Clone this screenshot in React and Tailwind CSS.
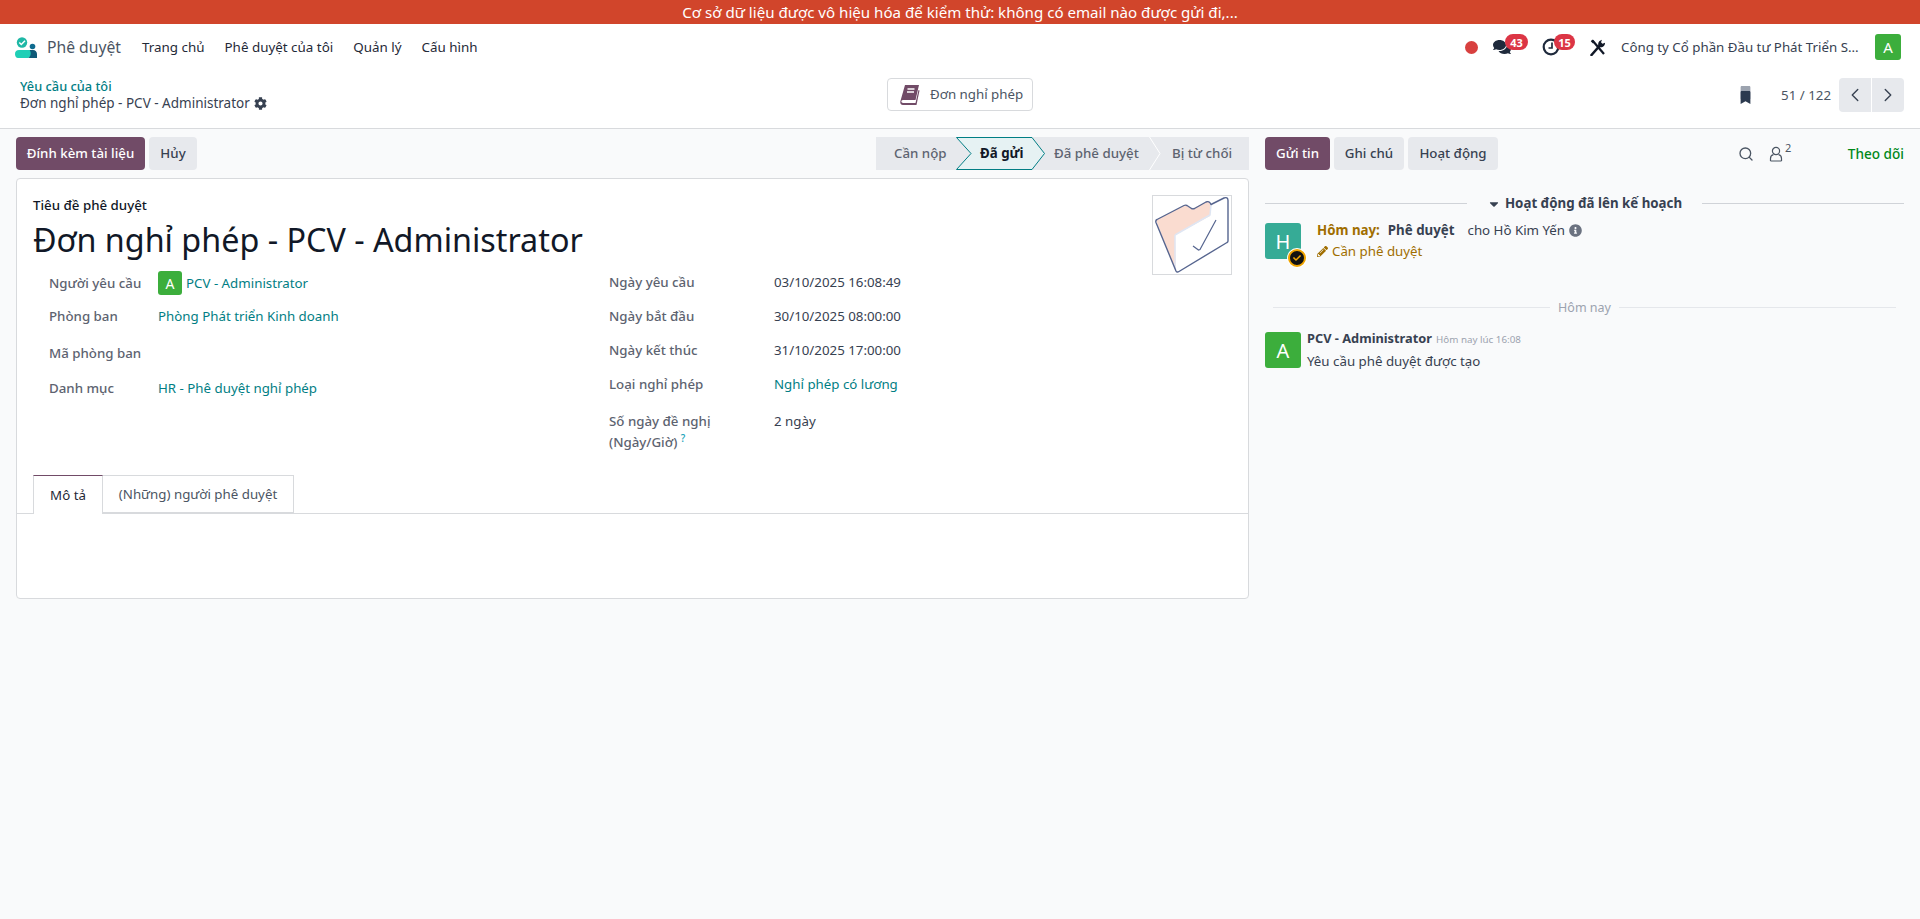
import React from "react";
import { ChevronLeft, ChevronRight, Search } from "lucide-react";
import { FaComments, FaCog, FaBookmark, FaCaretDown, FaInfoCircle, FaPencilAlt, FaCheck } from "react-icons/fa";

const font = { fontFamily: '"Noto Sans", sans-serif' };

function Logo() {
  return (
    <svg width="22" height="21" viewBox="0 0 22 21" className="shrink-0">
      <circle cx="7" cy="5.500" r="5.200" fill="#1fb8a6" />
      <path d="M4.300 5.500l2 2L10 3.800" fill="none" stroke="#fff" strokeWidth="1.500" />
      <circle cx="17.500" cy="9.500" r="2.800" fill="#0f6b8f" />
      <path d="M0 17c0-2.500 1.500-4 4-4h10c4 0 3 7-1 8H3c-2 0-3-2-3-4z" fill="#1fcfb6" />
      <path d="M13 21c3-1 3.500-6 1.500-8H18c2.500 0 4 1.800 4 4v4z" fill="#0f5a78" />
    </svg>
  );
}

function Book() {
  return (
    <svg width="20" height="22" viewBox="0 0 20 22">
      <path d="M5 1h14l-3.500 15H3c-1.200 0-1.800 1-1.600 1.800.2.700.8 1.200 1.600 1.200h12.500l3-13 1 .5L16.500 21H3c-2 0-3-1.500-2.700-3.500z" fill="#714b67" />
      <path d="M4 15.500L7 2h11l-3 13.500z" fill="#714b67" />
      <path d="M7.500 5h7M7 8h7" stroke="#fff" strokeWidth="1.300" />
    </svg>
  );
}

function Folder() {
  return (
    <svg width="78" height="78" viewBox="1 1 78 78">
      <path d="M4 25 L33 10 L40.700 14 L56 5.700 L59 10 L58 21 L23 40 L24 77z" fill="#fadcd0" />
      <path d="M23 40 L58 20 L59 10" fill="none" stroke="#dfe6f3" strokeWidth="1.500" />
      <path d="M23 40 L23 74" stroke="#dfe6f3" strokeWidth="1.500" />
      <path d="M5 24.500 L32 10.500 C33 10 34 10 35 10.500 L39.500 13.500 C40.500 14 41.500 14 42.500 13.500 L54 7 C56 6 58 7 59 9.500 L72 3 C74.500 2 76 3 76 5.500 L76 46 C76 46.500 76 47 75 47.500 L27 76.500 C25.500 77.500 24.500 77 24 76 L4 27.500 C3.500 26 4 25 5 24.500z" fill="none" stroke="#56658f" strokeWidth="1.400" strokeLinejoin="round" />
      <path d="M41 51l5.500 4 1.500-.5L64 25" fill="none" stroke="#56658f" strokeWidth="1.200" />
    </svg>
  );
}

function Clock() {
  return (
    <svg width="18" height="18" viewBox="0 0 18 18">
      <circle cx="9" cy="9" r="7.300" fill="none" stroke="#1f2a3c" strokeWidth="2.200" />
      <path d="M10 4.500V10H6.500" fill="none" stroke="#1f2a3c" strokeWidth="1.700" />
    </svg>
  );
}

function Tools() {
  return (
    <svg width="16" height="17" viewBox="0 0 16 17">
      <path d="M1.500 16L9 7.500" stroke="#111827" strokeWidth="2.600" strokeLinecap="round" />
      <path d="M9 8c-1.500-1.800-1-4.500.5-6L12 .8 11 3.300l1.500 1.500L15 3.800c.2 2.500-2 5-5 4.500z" fill="#111827" />
      <path d="M2.500 1.500L14 15" stroke="#111827" strokeWidth="2.200" />
      <path d="M.8 2.200L2.400.6 4.500 3 3 4.500z" fill="#111827" />
    </svg>
  );
}

function Badge({ children, className }) {
  return (
    <span className={`absolute flex h-4 items-center justify-center rounded-full bg-[#dc3545] text-[11px] font-bold text-white ${className}`}>
      {children}
    </span>
  );
}

function Avatar({ letter, bg, size, text }) {
  return (
    <div className={`flex shrink-0 items-center justify-center rounded-[3px] text-white ${bg} ${size} ${text}`}>{letter}</div>
  );
}

function Field({ label, h, children }) {
  return (
    <div className={`flex items-center ${h}`}>
      <div className="w-[109px] shrink-0 font-medium text-[#5d6370]">{label}</div>
      <div className="flex items-center">{children}</div>
    </div>
  );
}

function RField({ label, children }) {
  return (
    <div className="flex h-[34px] items-center">
      <div className="w-[165px] shrink-0 font-medium text-[#5d6370]">{label}</div>
      <div>{children}</div>
    </div>
  );
}

function Stage({ w, pl, active, children }) {
  return (
    <div className={`relative flex h-full items-center ${w} ${pl} ${active ? "font-bold text-[#111827]" : "font-medium text-[#5d6370]"}`}>
      {children}
    </div>
  );
}

function Chevron({ cls }) {
  return (
    <svg width="12" height="33" viewBox="0 0 12 33" className={`absolute top-0 ${cls}`}>
      <path d="M0.500 0L11 16.500 0.500 33" fill="none" stroke="#fff" strokeWidth="1" />
    </svg>
  );
}

export default function App() {
  return (
    <div className="flex min-h-[919px] flex-col bg-[#f9fafb] text-[13.300px] leading-[21px] text-[#374151]" style={font}>
      <div className="flex h-6 items-center justify-center bg-[#d1452b] text-[15.100px] text-white">
        Cơ sở dữ liệu được vô hiệu hóa để kiểm thử: không có email nào được gửi đi,...
      </div>

      <header className="flex h-[46px] items-center bg-white pl-[15px] pr-[19px]">
        <Logo />
        <span className="ml-[10px] text-[15.700px] text-[#4b5563]">Phê duyệt</span>
        <nav className="ml-[21px] flex gap-[20px] text-[13.400px] text-[#1f2937]">
          <span>Trang chủ</span>
          <span>Phê duyệt của tôi</span>
          <span>Quản lý</span>
          <span>Cấu hình</span>
        </nav>
        <div className="ml-auto flex items-center">
          <span className="h-[13px] w-[13px] rounded-full bg-[#d8403f]" />
          <span className="relative ml-[15px] flex w-[49px] text-[#1f2a3c]">
            <FaComments size={18} />
            <Badge className="-top-[4px] left-[12px] w-[23px]">43</Badge>
          </span>
          <span className="relative flex w-[48px]">
            <Clock />
            <Badge className="-top-[4px] left-[12px] w-[21px]">15</Badge>
          </span>
          <Tools />
          <span className="ml-[15px] w-[254px] whitespace-nowrap text-[#374151]">Công ty Cổ phần Đầu tư Phát Triển S...</span>
          <Avatar letter="A" bg="bg-[#3cae3c]" size="h-[26px] w-[26px]" text="text-[15px]" />
        </div>
      </header>

      <div className="relative flex h-[59px] items-start border-b border-[#d8dadd] bg-white pl-5 pr-4">
        <div className="pt-[8px] leading-[17px]">
          <div className="text-[12.800px] font-medium text-[#017e84]">Yêu cầu của tôi</div>
          <div className="flex items-center gap-1 text-[13.500px] text-[#374151]">
            Đơn nghỉ phép - PCV - Administrator <FaCog size={13} />
          </div>
        </div>
        <div className="absolute left-[887px] top-[8px] flex h-[33px] w-[146px] items-center gap-[10px] rounded-[4px] border border-[#d8dadd] pl-[12px] text-[#4b5563]">
          <Book />
          <span>Đơn nghỉ phép</span>
        </div>
        <div className="ml-auto flex items-center pt-[8px]">
          <span className="relative mr-[29px] h-[18px] w-[13px]">
            <FaBookmark size={13} className="absolute right-0 top-0 text-[#9ca3af]" />
            <FaBookmark size={13} className="absolute bottom-0 left-0 text-[#2c3a4f]" />
          </span>
          <span className="mr-2 text-[#4b5563]">51 / 122</span>
          <div className="flex h-[34px] gap-px">
            <span className="flex w-[32px] items-center justify-center rounded-l-[4px] bg-[#e7e9ed]"><ChevronLeft size={22} strokeWidth={1.5} /></span>
            <span className="flex w-[32px] items-center justify-center rounded-r-[4px] bg-[#e7e9ed]"><ChevronRight size={22} strokeWidth={1.5} /></span>
          </div>
        </div>
      </div>

      <main className="flex flex-1">
        <section className="w-[1265px] shrink-0 pl-4 pr-4 pt-2">
          <div className="flex h-[33px] items-center justify-between">
            <div className="flex h-full gap-1">
              <span className="flex w-[129px] items-center justify-center rounded-[4px] bg-[#714b67] font-medium text-white">Đính kèm tài liệu</span>
              <span className="flex w-[48px] items-center justify-center rounded-[4px] bg-[#e7e9ed] font-medium">Hủy</span>
            </div>
            <div className="relative flex h-full bg-[#e7e9ed]">
              <Stage w="w-[80px]" pl="pl-[18px]">Cần nộp</Stage>
              <Stage w="w-[76px]" pl="pl-[24px]" active>
                <svg width="90" height="33" viewBox="0 0 90 33" className="absolute left-0 top-0">
                  <path d="M0.500 0.500H76L88.500 16.500 76 32.500H0.500L15 16.500z" fill="#e6f2f3" stroke="#017e84" strokeWidth="1" />
                </svg>
                <span className="relative">Đã gửi</span>
              </Stage>
              <Stage w="w-[117px]" pl="pl-[22px]">Đã phê duyệt</Stage>
              <Stage w="w-[100px]" pl="pl-[23px]">
                <Chevron cls="left-0" />
                Bị từ chối
              </Stage>
            </div>
          </div>

          <div className="mt-2 h-[421px] rounded-[4px] border border-[#d8dadd] bg-white">
            <div className="relative px-4 pt-[14px]">
              <div className="font-medium leading-[24px] text-[#111827]">Tiêu đề phê duyệt</div>
              <h1 className="text-[32.300px] leading-[44px] text-[#111827]">Đơn nghỉ phép - PCV - Administrator</h1>
              <div className="absolute right-[16px] top-[16px] flex h-[80px] w-[80px] items-center justify-center border border-[#d8dadd]">
                <Folder />
              </div>
              <div className="flex pt-[4px]">
                <div className="w-[576px] shrink-0 pl-4 pt-px">
                  <Field label="Người yêu cầu" h="h-[34px]">
                    <Avatar letter="A" bg="bg-[#3cae3c]" size="h-6 w-6" text="text-[14px]" />
                    <span className="ml-[4px] text-[#017e84]">PCV - Administrator</span>
                  </Field>
                  <Field label="Phòng ban" h="h-[33px]">
                    <span className="text-[#017e84]">Phòng Phát triển Kinh doanh</span>
                  </Field>
                  <Field label="Mã phòng ban" h="h-[40px]" />
                  <Field label="Danh mục" h="h-[30px]">
                    <span className="text-[#017e84]">HR - Phê duyệt nghỉ phép</span>
                  </Field>
                </div>
                <div>
                  <RField label="Ngày yêu cầu">03/10/2025 16:08:49</RField>
                  <RField label="Ngày bắt đầu">30/10/2025 08:00:00</RField>
                  <RField label="Ngày kết thúc">31/10/2025 17:00:00</RField>
                  <RField label="Loại nghỉ phép"><span className="text-[#017e84]">Nghỉ phép có lương</span></RField>
                  <div className="flex pt-[10px]">
                    <div className="w-[165px] shrink-0 font-medium text-[#5d6370]">
                      Số ngày đề nghị<br />(Ngày/Giờ) <sup className="text-[10px] leading-none text-[#17a2b8]">?</sup>
                    </div>
                    <div>2 ngày</div>
                  </div>
                </div>
              </div>
            </div>
            <div className="mt-[22px] flex h-[39px] border-b border-[#d8dadd] pl-4">
              <div className="flex h-[39px] w-[70px] items-center justify-center border-x border-t border-x-[#d8dadd] border-t-[#714b67] bg-white text-[#1f2937]">Mô tả</div>
              <div className="flex h-[38px] w-[191px] items-center justify-center border-y border-r border-[#d8dadd] text-[#4b5563]">(Những) người phê duyệt</div>
            </div>
          </div>
        </section>

        <aside className="flex-1 pr-4 pt-2">
          <div className="flex h-[33px] items-center">
            <span className="flex h-full w-[65px] items-center justify-center rounded-[4px] bg-[#714b67] font-medium text-white">Gửi tin</span>
            <span className="ml-1 flex h-full w-[70px] items-center justify-center rounded-[4px] bg-[#e7e9ed] font-medium">Ghi chú</span>
            <span className="ml-1 flex h-full w-[90px] items-center justify-center rounded-[4px] bg-[#e7e9ed] font-medium">Hoạt động</span>
            <Search size={16} className="ml-[240px] text-[#4b5563]" />
            <svg width="14" height="16" viewBox="0 0 14 16" className="ml-[15px]">
              <circle cx="7" cy="5" r="3.600" fill="none" stroke="#4b5563" strokeWidth="1.200" />
              <path d="M1.500 15v-2.500c0-2 1.500-3.500 3-3.800M12.500 15v-2.500c0-2-1.500-3.500-3-3.800M1.500 15h11" fill="none" stroke="#4b5563" strokeWidth="1.200" />
            </svg>
            <sup className="ml-[2px] text-[11px] text-[#4b5563]">2</sup>
            <span className="ml-auto text-[13.600px] font-medium text-[#008818]">Theo dõi</span>
          </div>

          <div className="mt-[23px] flex items-center">
            <span className="h-px flex-1 bg-[#d0d3d8]" />
            <span className="flex items-center gap-[4px] px-5 font-bold">
              <FaCaretDown size={14} /> Hoạt động đã lên kế hoạch
            </span>
            <span className="h-px flex-1 bg-[#d0d3d8]" />
          </div>

          <div className="mt-[9px] flex">
            <div className="relative">
              <Avatar letter="H" bg="bg-[#36ab96]" size="h-9 w-9" text="text-[20px]" />
              <span className="absolute -bottom-[5px] -right-[5px] flex h-[18px] w-[18px] items-center justify-center rounded-full border-[2px] border-[#f0a400] bg-[#111] ring-[1px] ring-white">
                <FaCheck size={8} className="text-[#f0a400]" />
              </span>
            </div>
            <div className="ml-4 -mt-[3px]">
              <div className="flex h-[21px] items-center">
                <span className="font-bold text-[#a06e00]">Hôm nay:</span>
                <span className="ml-2 font-bold">Phê duyệt</span>
                <span className="ml-[13px]">cho Hồ Kim Yến</span>
                <FaInfoCircle size={13} className="ml-[4px] text-[#6b7280]" />
              </div>
              <div className="flex items-center gap-[4px] text-[#a06e00]">
                <FaPencilAlt size={11} /> Cần phê duyệt
              </div>
            </div>
          </div>

          <div className="mt-[35px] flex items-center px-2 text-[12.500px] text-[#9ca3af]">
            <span className="h-px flex-1 bg-[#e5e7eb]" />
            <span className="px-2">Hôm nay</span>
            <span className="h-px flex-1 bg-[#e5e7eb]" />
          </div>

          <div className="mt-[14px] flex">
            <Avatar letter="A" bg="bg-[#3cae3c]" size="h-9 w-9" text="text-[20px]" />
            <div className="ml-[6px] -mt-[2px]">
              <div className="flex items-baseline gap-[4px] leading-[16px]">
                <span className="text-[12.800px] font-bold">PCV - Administrator</span>
                <span className="text-[9.800px] text-[#9ca3af]">Hôm nay lúc 16:08</span>
              </div>
              <div className="mt-[3px]">Yêu cầu phê duyệt được tạo</div>
            </div>
          </div>
        </aside>
      </main>
    </div>
  );
}
